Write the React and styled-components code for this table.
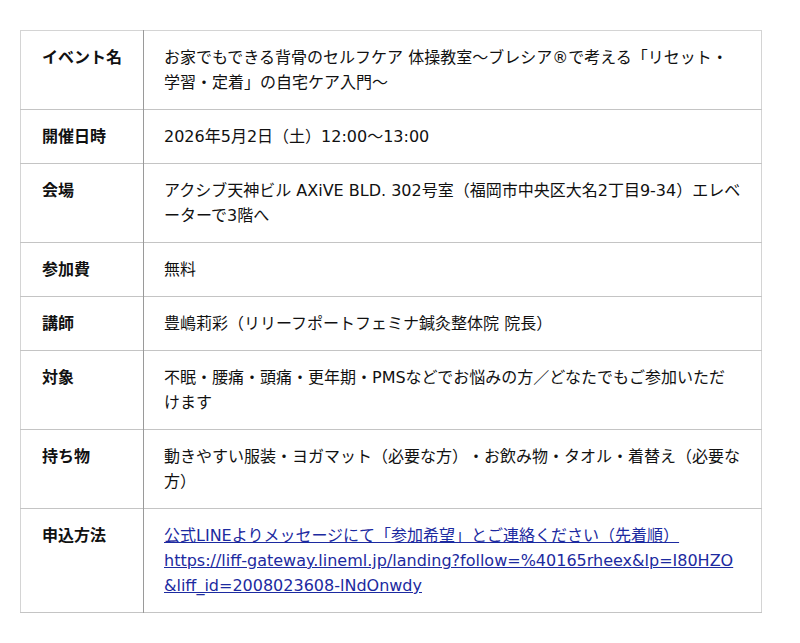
import React from 'react';
import styled, { createGlobalStyle } from 'styled-components';

const GlobalStyle = createGlobalStyle`
  body {
    margin: 0;
    background: #fff;
    font-family: "DejaVu Sans", "Noto Sans CJK JP", sans-serif;
    color: #222;
  }
`;

const Page = styled.div`
  padding: 30px 38px 30px 20px;
`;

const Table = styled.table`
  width: 742px;
  border-collapse: collapse;
  border: 1px solid #d4d4d4;
  font-size: 16px;
  line-height: 25px;
  text-spacing-trim: space-all;
`;

const Row = styled.tr`
  border-bottom: 1px solid #c4c4c4;
`;

const Label = styled.th`
  width: 81px;
  padding: 14px 20px 14px 21px;
  text-align: left;
  vertical-align: top;
  font-weight: bold;
  color: #111;
  border-right: 1px solid #9a9a9a;
`;

const Value = styled.td`
  padding: 14px 20px 14px 20px;
  vertical-align: top;
  color: #111;
`;

const Link = styled.a`
  color: #1c2aa0;
  text-decoration: underline;
  word-break: break-all;
`;

const rows = [
  ['イベント名', 'お家でもできる背骨のセルフケア 体操教室〜ブレシア®で考える「リセット・学習・定着」の自宅ケア入門〜'],
  ['開催日時', '2026年5月2日（土）12:00〜13:00'],
  ['会場', 'アクシブ天神ビル AXiVE BLD. 302号室（福岡市中央区大名2丁目9-34）エレベーターで3階へ'],
  ['参加費', '無料'],
  ['講師', '豊嶋莉彩（リリーフポートフェミナ鍼灸整体院 院長）'],
  ['対象', <>不眠・腰痛・頭痛・更年期・PMSなどでお悩みの方／どなたでもご参加いただ<br />けます</>],
  ['持ち物', '動きやすい服装・ヨガマット（必要な方）・お飲み物・タオル・着替え（必要な方）'],
];

const App = () => (
  <Page>
    <GlobalStyle />
    <Table>
      <tbody>
        {rows.map(([label, value]) => (
          <Row key={label}>
            <Label>{label}</Label>
            <Value>{value}</Value>
          </Row>
        ))}
        <Row>
          <Label>申込方法</Label>
          <Value>
            <Link href="#">
              公式LINEよりメッセージにて「参加希望」とご連絡ください（先着順）<br />
              https://liff-gateway.lineml.jp/landing?follow=%40165rheex&amp;lp=I80HZO&amp;liff_id=2008023608-lNdOnwdy
            </Link>
          </Value>
        </Row>
      </tbody>
    </Table>
  </Page>
);

export default App;
